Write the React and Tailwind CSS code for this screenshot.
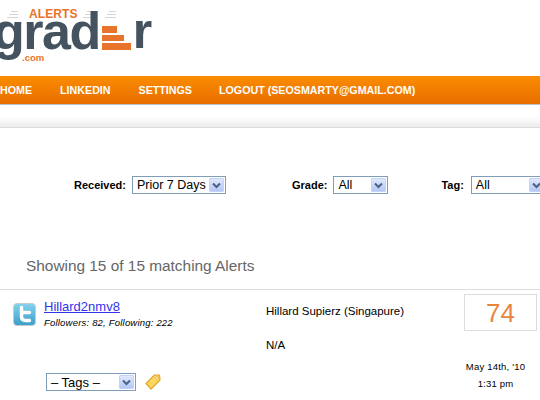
import React from 'react';

function FakeSelect({ label, className }) {
  return (
    <div className={`flex h-[18px] shrink-0 items-center justify-between border border-[#7f9db9] bg-white pl-[4px] pr-[1px] text-[12.5px] text-black ${className}`}>
      <span className="whitespace-nowrap leading-none">{label}</span>
      <span className="flex h-[14px] w-[15px] shrink-0 items-center justify-center rounded-[1px] border border-[#c3d3f5] bg-gradient-to-b from-[#dfe8fd] to-[#b4c8f6]">
        <svg width="9" height="7" viewBox="0 0 9 7">
          <path d="M1 1.5 L4.5 5 L8 1.5" fill="none" stroke="#4d6185" strokeWidth="2" />
        </svg>
      </span>
    </div>
  );
}

function SpeedLines({ className }) {
  return (
    <span className={`flex flex-col items-end gap-[2px] ${className}`}>
      <span className="h-[1px] w-[7px] bg-[#d5d5d5]" />
      <span className="h-[1px] w-[9px] bg-[#d5d5d5]" />
      <span className="h-[1px] w-[11px] bg-[#d5d5d5]" />
    </span>
  );
}

function Logo() {
  return (
    <div className="h-[76px] w-[160px] overflow-hidden">
      <div className="flex h-[21px] items-end pl-[7px]">
        <SpeedLines className="mb-[3px]" />
        <span className="ml-[11px] text-[12px] font-bold leading-[14px] tracking-[0.1px] text-[#e8732a]">ALERTS</span>
        <SpeedLines className="mb-[3px] ml-[5px]" />
        <SpeedLines className="mb-[3px] ml-[11px]" />
      </div>
      <div className="-mt-[10px] ml-[-7px] flex h-[40px] items-end">
        <span className="text-[52px] font-bold leading-[40px] tracking-[-1.5px] text-[#44535f]">grad</span>
        <span className="mb-[1px] ml-[2px] flex flex-col gap-[2px]">
          <span className="h-[7px] w-[15px] bg-[#e8732a]" />
          <span className="h-[6px] w-[22px] bg-[#e8732a]" />
          <span className="h-[7px] w-[29px] bg-[#e8732a]" />
        </span>
        <span className="ml-[2px] text-[50px] font-bold leading-[40px] text-[#44535f]">r</span>
      </div>
      <div className="mt-[2px] pl-[22px] text-[9.5px] font-bold leading-[10px] text-[#e8732a]">.com</div>
    </div>
  );
}

export default function App() {
  return (
    <div className="h-[400px] w-[540px] overflow-hidden bg-white font-['Liberation_Sans',Arial,sans-serif]">
      <Logo />

      <nav className="flex h-[29px] items-center border-b border-[#b8c0c8] bg-gradient-to-b from-[#fb8c00] to-[#e86e00] text-[10.7px] font-bold text-white">
        <a className="whitespace-nowrap">HOME</a>
        <a className="ml-[28px] whitespace-nowrap">LINKEDIN</a>
        <a className="ml-[28px] whitespace-nowrap">SETTINGS</a>
        <a className="ml-[27px] whitespace-nowrap">LOGOUT (SEOSMARTY@GMAIL.COM)</a>
      </nav>

      <div className="mt-[12px] h-[11px] border-b border-[#dcdcdc] bg-gradient-to-b from-white to-[#ececec]" />

      <div className="mt-[48px] flex items-center whitespace-nowrap pl-[74px] text-[11px] font-bold text-black">
        <span>Received:</span>
        <FakeSelect label="Prior 7 Days" className="ml-[6px] w-[94px] font-normal" />
        <span className="ml-[66px]">Grade:</span>
        <FakeSelect label="All" className="ml-[6px] w-[55px] font-normal" />
        <span className="ml-[53px]">Tag:</span>
        <FakeSelect label="All" className="ml-[7px] w-[75px] font-normal" />
      </div>

      <h2 className="mt-[63px] pl-[26px] text-[15.4px] font-normal leading-[18px] text-[#666666]">
        Showing 15 of 15 matching Alerts
      </h2>

      <div className="mt-[14px] flex border-t border-[#dddddd] pt-[4px]">
        <div className="flex w-[266px] shrink-0 flex-col">
          <div className="flex pl-[13px]">
            <svg className="mt-[9px]" width="23" height="23" viewBox="0 0 23 23">
              <defs>
                <linearGradient id="bird" x1="0" y1="0" x2="0" y2="1">
                  <stop offset="0" stopColor="#86d3ef" />
                  <stop offset="1" stopColor="#3c9ec8" />
                </linearGradient>
              </defs>
              <rect x="0.5" y="0.5" width="22" height="22" rx="3.5" fill="url(#bird)" stroke="#c4ccd0" />
              <path d="M8.5 4.5 V13.5 Q8.5 17.5 12.5 17.5 H16.5 M8.5 9.5 H16.5" fill="none" stroke="#fff" strokeWidth="3.4" strokeLinecap="round" />
            </svg>
            <div className="ml-[8px]">
              <a className="mt-[3px] block text-[13px] leading-[20px] text-[#3333ee] underline">Hillard2nmv8</a>
              <p className="text-[9.5px] italic leading-[12px] tracking-[0.2px] text-black">Followers: 82, Following: 222</p>
            </div>
          </div>
          <div className="mt-[44px] flex items-center pl-[46px]">
            <FakeSelect label="– Tags –" className="w-[90px] text-[13px]" />
            <svg className="ml-[8px]" width="18" height="18" viewBox="0 0 18 18">
              <path d="M2 10.5 L10.5 2 L15.5 2 L16 7 L7 16 Z" fill="#fcd75f" stroke="#e3a62a" strokeWidth="1.2" strokeLinejoin="round" />
              <circle cx="13" cy="5" r="1.2" fill="#fff" stroke="#d99a25" strokeWidth="0.6" />
            </svg>
          </div>
        </div>

        <div className="flex w-[198px] shrink-0 flex-col text-[11.5px] leading-[14px] text-black">
          <span className="mt-[10px]">Hillard Supierz (Singapure)</span>
          <span className="mt-[20px]">N/A</span>
        </div>

        <div className="flex w-[73px] shrink-0 flex-col items-center">
          <div className="flex h-[37px] w-[73px] items-center justify-center border border-[#dddddd] text-[26px] leading-none text-[#e8853f]">74</div>
          <div className="mr-[10px] mt-[27px] text-center text-[9.5px] leading-[17px] text-black">
            <p className="tracking-[0.2px]">May 14th, '10</p>
            <p className="tracking-[0.2px]">1:31 pm</p>
          </div>
        </div>
      </div>
    </div>
  );
}
